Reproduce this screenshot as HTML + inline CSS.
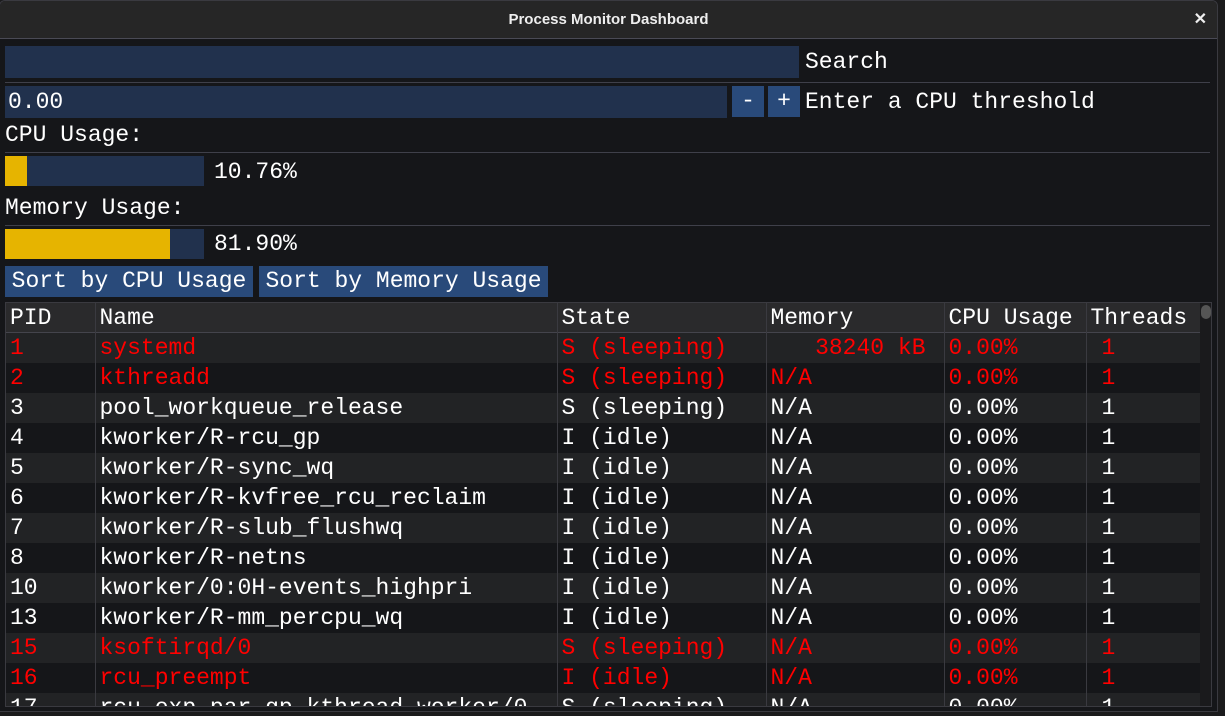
<!DOCTYPE html><html><head><style>
*{margin:0;padding:0;box-sizing:border-box}
body{width:1225px;height:716px;background:#1b1b1c;overflow:hidden;position:relative;font-family:"Liberation Mono",monospace;font-size:23px;color:#fff}
.win{position:absolute;left:-1px;top:0;width:1219px;height:712px;background:#151619;border:1px solid #3a3a40;border-radius:6px 6px 0 0;overflow:hidden}
.tb{position:absolute;left:0;top:0;right:0;height:38px;background:#262626;border-bottom:1px solid #4a4a55;font-family:"Liberation Sans",sans-serif;font-weight:bold;font-size:15px;text-align:center;line-height:37px;color:#eee}
.x{position:absolute;right:10px;top:0;font-size:16px}
.a{position:absolute;white-space:pre;line-height:30px}
.in{position:absolute;background:#21314d}
.sep{position:absolute;left:5px;width:1205px;height:1px;background:#3f404a}
.btn{position:absolute;background:#294a7a;text-align:center;line-height:31px;white-space:pre}
table{position:absolute;left:0;top:0;width:1195px;border-collapse:collapse;table-layout:fixed}
td{height:30px;padding:0 0 0 4px;border-left:1px solid #3a3a40;white-space:pre;overflow:hidden;line-height:30px}
td:first-child{border-left:none}
tr:nth-child(odd) td{background:#151619}
tr:nth-child(even) td{background:#222325}
tr.h td{background:#2a2a2c;box-shadow:inset 0 -1px #44444c}
tr.r td{color:#f00}
td.c{padding-left:15px}
</style></head><body>
<div class="win">
<div class="tb">Process Monitor Dashboard<span class="x">✕</span></div>
<div class="in" style="left:5px;top:45px;width:794px;height:32px"></div>
<div class="a" style="left:805px;top:46px">Search</div>
<div class="sep" style="top:81px"></div>
<div class="in" style="left:5px;top:85px;width:722px;height:32px"></div>
<div class="a" style="left:8px;top:86px">0.00</div>
<div class="btn" style="left:732px;top:85px;width:32px">-</div>
<div class="btn" style="left:768px;top:85px;width:32px">+</div>
<div class="a" style="left:805px;top:86px">Enter a CPU threshold</div>
<div class="a" style="left:5px;top:119px">CPU Usage:</div>
<div class="sep" style="top:151px"></div>
<div class="in" style="left:5px;top:155px;width:199px;height:30px"><div style="width:22px;height:30px;background:#e6b400"></div></div>
<div class="a" style="left:214px;top:156px">10.76%</div>
<div class="a" style="left:5px;top:192px">Memory Usage:</div>
<div class="sep" style="top:224px"></div>
<div class="in" style="left:5px;top:228px;width:199px;height:30px"><div style="width:165px;height:30px;background:#e6b400"></div></div>
<div class="a" style="left:214px;top:228px">81.90%</div>
<div class="btn" style="left:5px;top:265px;width:248px">Sort by CPU Usage</div>
<div class="btn" style="left:259px;top:265px;width:289px">Sort by Memory Usage</div>
<div style="position:absolute;left:5px;top:301px;width:1207px;height:405px;border:1px solid #3a3a40;overflow:hidden">
<table>
<colgroup><col style="width:89px"><col style="width:462px"><col style="width:209px"><col style="width:178px"><col style="width:142px"><col style="width:115px"></colgroup>
<tr class="h"><td>PID</td><td>Name</td><td>State</td><td>Memory</td><td>CPU Usage</td><td>Threads</td></tr>
<tr class="r"><td>1</td><td>systemd</td><td>S (sleeping)</td><td style="text-align:right;padding-right:18px">38240 kB</td><td>0.00%</td><td class="c">1</td></tr>
<tr class="r"><td>2</td><td>kthreadd</td><td>S (sleeping)</td><td>N/A</td><td>0.00%</td><td class="c">1</td></tr>
<tr><td>3</td><td>pool_workqueue_release</td><td>S (sleeping)</td><td>N/A</td><td>0.00%</td><td class="c">1</td></tr>
<tr><td>4</td><td>kworker/R-rcu_gp</td><td>I (idle)</td><td>N/A</td><td>0.00%</td><td class="c">1</td></tr>
<tr><td>5</td><td>kworker/R-sync_wq</td><td>I (idle)</td><td>N/A</td><td>0.00%</td><td class="c">1</td></tr>
<tr><td>6</td><td>kworker/R-kvfree_rcu_reclaim</td><td>I (idle)</td><td>N/A</td><td>0.00%</td><td class="c">1</td></tr>
<tr><td>7</td><td>kworker/R-slub_flushwq</td><td>I (idle)</td><td>N/A</td><td>0.00%</td><td class="c">1</td></tr>
<tr><td>8</td><td>kworker/R-netns</td><td>I (idle)</td><td>N/A</td><td>0.00%</td><td class="c">1</td></tr>
<tr><td>10</td><td>kworker/0:0H-events_highpri</td><td>I (idle)</td><td>N/A</td><td>0.00%</td><td class="c">1</td></tr>
<tr><td>13</td><td>kworker/R-mm_percpu_wq</td><td>I (idle)</td><td>N/A</td><td>0.00%</td><td class="c">1</td></tr>
<tr class="r"><td>15</td><td>ksoftirqd/0</td><td>S (sleeping)</td><td>N/A</td><td>0.00%</td><td class="c">1</td></tr>
<tr class="r"><td>16</td><td>rcu_preempt</td><td>I (idle)</td><td>N/A</td><td>0.00%</td><td class="c">1</td></tr>
<tr><td>17</td><td>rcu_exp_par_gp_kthread_worker/0</td><td>S (sleeping)</td><td>N/A</td><td>0.00%</td><td class="c">1</td></tr>
</table>
<div style="position:absolute;left:1194px;top:0;width:12px;height:405px;background:#1a1a1c"><div style="margin:2px 1px;width:10px;height:14px;border-radius:5px;background:#555"></div></div>
</div>
</div>
</body></html>
